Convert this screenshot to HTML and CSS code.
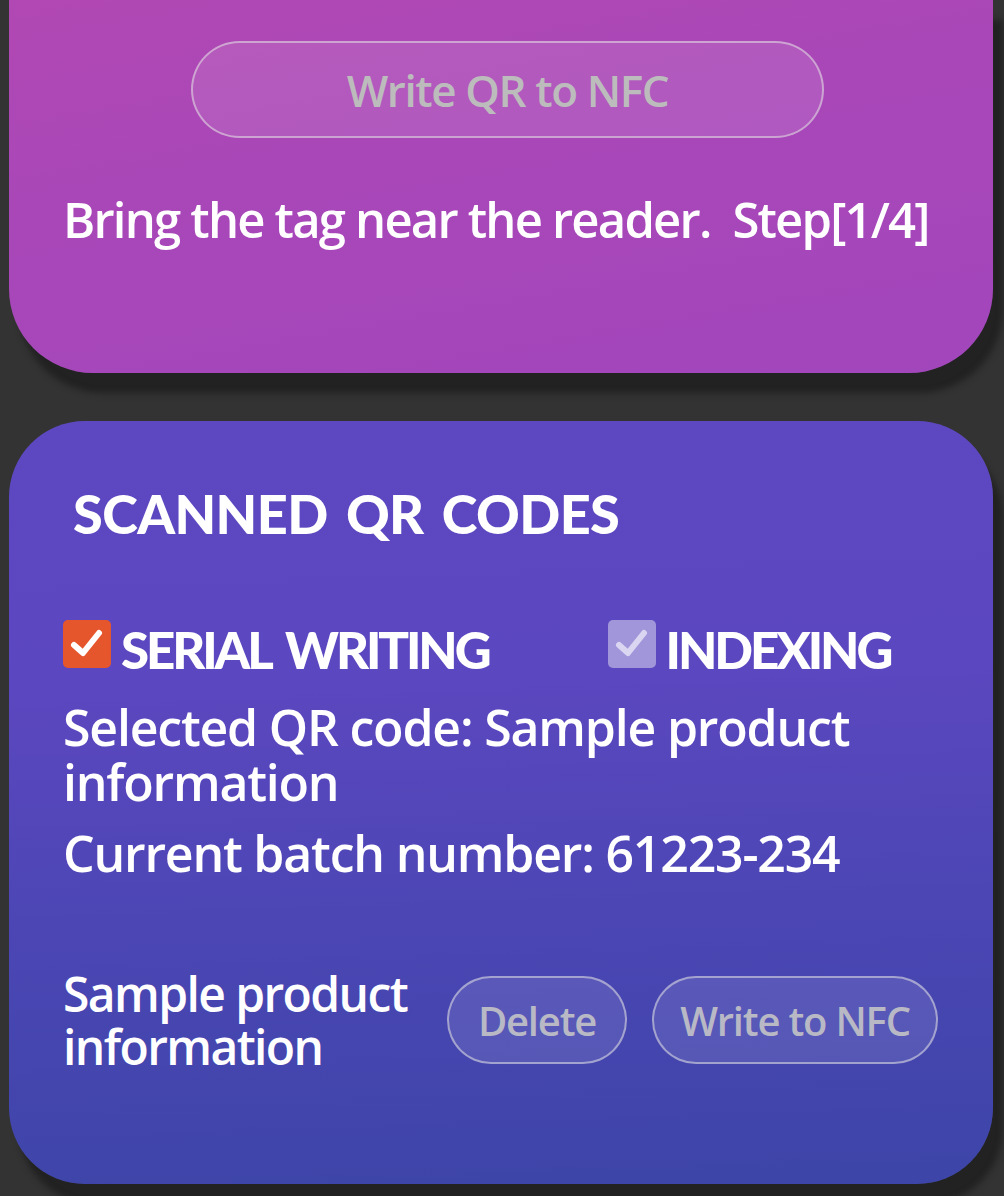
FILE: index.html
```html
<!DOCTYPE html>
<html>
<head>
<meta charset="utf-8">
<link rel="stylesheet" href="styles.css">
</head>
<body>
<div class="page">
  <section class="card card-top">
    <button class="pill pill-wide">Write QR to NFC</button>
    <p class="status">Bring the tag near the reader.&nbsp; Step[1/4]</p>
  </section>
  <section class="card card-bottom">
    <h2 class="heading">SCANNED QR CODES</h2>
    <div class="checks">
      <label class="check">
        <span class="box box-on">
          <svg viewBox="0 0 48 48" width="48" height="48"><path d="M11 25 L20 33 L36 13" fill="none" stroke="#fff" stroke-width="6" stroke-linecap="round" stroke-linejoin="round"/></svg>
        </span>
        <span class="check-label">SERIAL WRITING</span>
      </label>
      <label class="check check-right">
        <span class="box box-off">
          <svg viewBox="0 0 48 48" width="48" height="48"><path d="M11 25 L20 33 L36 13" fill="none" stroke="rgba(255,255,255,0.6)" stroke-width="6" stroke-linecap="round" stroke-linejoin="round"/></svg>
        </span>
        <span class="check-label">INDEXING</span>
      </label>
    </div>
    <p class="info">Selected QR code: Sample product information</p>
    <p class="info info-batch">Current batch number: 61223-234</p>
    <div class="item">
      <p class="item-name">Sample product information</p>
      <button class="pill pill-del">Delete</button>
      <button class="pill pill-write">Write to NFC</button>
    </div>
  </section>
</div>
</body>
</html>
```
FILE: styles.css
```css
html, body {
  margin: 0;
  padding: 0;
  background: #333333;
}
body {
  width: 1004px;
  height: 1196px;
  overflow: hidden;
  font-family: "Open Sans", "Noto Sans", sans-serif;
  color: #ffffff;
}
.page {
  display: flex;
  flex-direction: column;
  gap: 48px;
  padding: 0 11px 0 9px;
}
.card {
  box-shadow: 10px 20px 6px rgba(20, 20, 20, 0.55);
}
.card-top {
  height: 373px;
  border-radius: 0 0 84px 84px;
  background: linear-gradient(170deg, #b148b3 0%, #a947b8 40%, #a246bc 100%);
  padding: 41px 0 0 0;
  box-sizing: border-box;
}
.pill {
  font-family: "Open Sans", "Noto Sans", sans-serif;
  font-weight: 600;
  color: #bcbcbc;
  background: rgba(255, 255, 255, 0.1);
  border: 2px solid rgba(225, 225, 225, 0.55);
  border-radius: 50px;
  letter-spacing: -1.2px;
  padding: 0;
}
.pill-wide {
  display: block;
  margin-left: 182px;
  width: 633px;
  height: 97px;
  font-size: 44px;
  letter-spacing: -1.4px;
}
.status {
  margin: 49px 0 0 54px;
  font-size: 49px;
  font-weight: 600;
  letter-spacing: -1.8px;
  line-height: 64px;
}
.card-bottom {
  height: 763px;
  border-radius: 76px;
  background: linear-gradient(178deg, #5e48c2 0%, #5b47bf 35%, #4b46b4 65%, #3d45a8 100%);
  padding: 61px 0 0 54px;
  box-sizing: border-box;
}
.heading {
  margin: 0 0 0 10px;
  font-family: "Lato", sans-serif;
  font-weight: 900;
  font-size: 54px;
  letter-spacing: -0.6px;
  word-spacing: 6px;
  line-height: 64px;
}
.checks {
  display: flex;
  align-items: center;
  margin-top: 64px;
}
.check {
  display: flex;
  align-items: center;
  gap: 10px;
}
.check-right {
  margin-left: 119px;
}
.box {
  width: 48px;
  height: 48px;
  border-radius: 5px;
  display: flex;
}
.box-on {
  background: #e6562c;
}
.box-off {
  background: rgba(220, 215, 240, 0.55);
}
.check-label {
  font-family: "Lato", sans-serif;
  font-weight: 900;
  font-size: 51px;
  letter-spacing: -3.1px;
  word-spacing: 7px;
  line-height: 56px;
  padding-top: 12px;
}
.info {
  margin: 22px 0 0 0;
  width: 860px;
  font-size: 50px;
  font-weight: 600;
  letter-spacing: -1.2px;
  line-height: 55px;
}
.info-batch {
  margin-top: 16px;
}
.item {
  display: flex;
  align-items: center;
  margin-top: 86px;
}
.item-name {
  margin: 0;
  width: 384px;
  font-size: 48px;
  font-weight: 600;
  letter-spacing: -1.6px;
  line-height: 53px;
}
.pill-del {
  width: 180px;
  height: 88px;
  font-size: 40px;
  color: #b9b9c6;
}
.pill-write {
  margin-left: 25px;
  width: 286px;
  height: 88px;
  font-size: 40px;
  color: #b9b9c6;
}
```
